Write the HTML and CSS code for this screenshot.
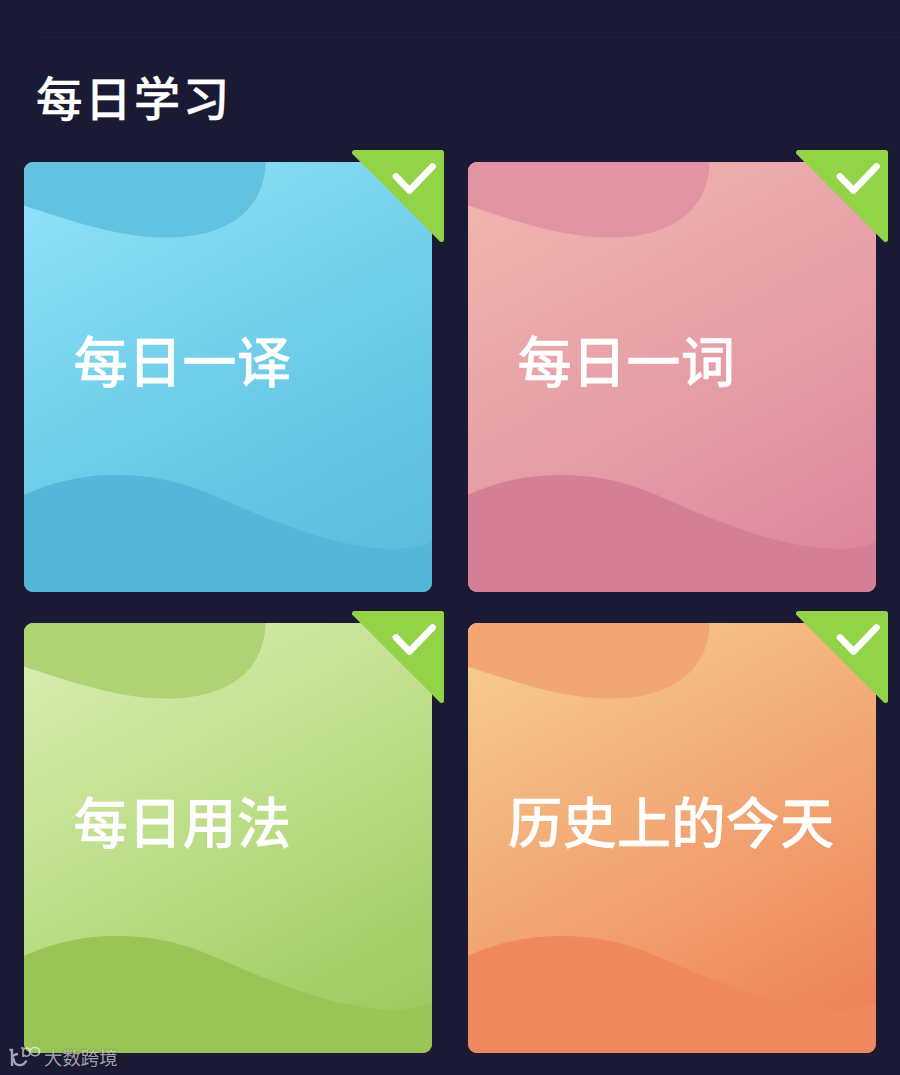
FILE: index.html
```html
<!DOCTYPE html>
<html lang="zh-CN">
  <head>
    <meta charset="UTF-8" />
    <meta name="viewport" content="width=device-width, initial-scale=1.0" />
    <title>每日学习</title>
    <link rel="stylesheet" href="styles.css">
  </head>
  <body>
    <!-- shared shapes -->
    <svg class="defs" width="0" height="0">
      <symbol id="waves" viewBox="0 0 408 430">
        <path class="blob" d="M0 0H241.500C241 46 206 75.500 142 75.500C95 75.500 47 59 0 43.500Z" />
        <path class="wave" d="M0 333C28 320 58 313 92 313C123 313 150 318 176 328C204 339 230 352 259 362C300 378 340 387 370 387C386 387 398 384 408 380V430H0Z" />
      </symbol>
      <symbol id="check" viewBox="0 0 92 92">
        <path class="corner" d="M2.500 2.500H89.500V89.500Z" />
        <path class="tick" d="M44 26.500L57.500 40.500L80.500 16.500" />
      </symbol>
    </svg>

    <main>
      <header>
        <h1>每日学习</h1>
      </header>

      <section id="liste">
        <article class="blue">
          <svg class="waves"><use href="#waves" /></svg>
          <h2>每日一译</h2>
          <svg class="check"><use href="#check" /></svg>
        </article>
        <article class="pink">
          <svg class="waves"><use href="#waves" /></svg>
          <h2>每日一词</h2>
          <svg class="check"><use href="#check" /></svg>
        </article>
        <article class="green">
          <svg class="waves"><use href="#waves" /></svg>
          <h2>每日用法</h2>
          <svg class="check"><use href="#check" /></svg>
        </article>
        <article class="orange">
          <svg class="waves"><use href="#waves" /></svg>
          <h2 class="lang">历史上的今天</h2>
          <svg class="check"><use href="#check" /></svg>
        </article>
      </section>
    </main>

    <div class="watermark">
      <svg viewBox="0 0 34 24">
        <path d="M1.500 5H4V21M4 13Q5 9.500 10 9M5.500 13C6 22 15 22 18.500 15.500" />
        <path class="thin" d="M13 3H15V12M15 7.500C15 1.500 22 1.500 22 7C22 12.500 15 12.500 15 7.500M22 7C22 1 31.500 1 31.500 6.500C31.500 12 24 12 22 7" />
      </svg>
      <span>大数跨境</span>
    </div>
  </body>
</html>
```
FILE: styles.css
```css
* {
  box-sizing: border-box;
  margin: 0;
  padding: 0;
}

body {
  background-color: #1b1a35;
  color: white;
  font-family: "Noto Sans CJK SC", sans-serif;
  height: 1075px;
  overflow: hidden;
}
.defs {
  position: absolute;
}
main {
  padding: 37px 24px 0;
}
header {
  height: 125px;
  margin-right: -24px;
  margin-left: 14px;
  border-top: 1px solid #201f3a;
}
h1 {
  padding-top: 23px;
  margin-left: -2px;
  font-size: 46.5px;
  font-weight: 500;
  line-height: 70px;
  letter-spacing: 2.4px;
  -webkit-text-stroke: 0.3px white;
}
#liste {
  display: grid;
  grid-template-columns: 408px 408px;
  grid-auto-rows: 430px;
  gap: 31.4px 36px;
}

article {
  position: relative;
  display: flex;
  align-items: center;
  padding: 0 0 37px 49.5px;
  border-radius: 9px;
}
.waves {
  position: absolute;
  top: 0;
  left: 0;
  width: 408px;
  height: 430px;
  border-radius: 9px;
}
.blob {
  fill: var(--blob);
}
.wave {
  fill: var(--wave);
}
h2 {
  position: relative;
  font-size: 54.4px;
  font-weight: 500;
  line-height: 80px;
  white-space: nowrap;
  -webkit-text-stroke: 0.3px white;
}
.lang {
  margin-left: -9.5px;
}

/* green corner that hangs over the card */
.check {
  position: absolute;
  top: -12px;
  right: -12px;
  width: 92px;
  height: 92px;
}
.corner {
  fill: #93d348;
  stroke: #93d348;
  stroke-width: 5;
  stroke-linejoin: round;
}
.tick {
  fill: none;
  stroke: white;
  stroke-width: 6.8;
  stroke-linecap: round;
  stroke-linejoin: round;
}

.blue {
  background: linear-gradient(152deg, #8fe1f7 5%, #65c7e3 65%, #5bbadb);
  --blob: #62c3e1;
  --wave: #55b7d8;
}
.pink {
  background: linear-gradient(152deg, #f1b5b0 5%, #e49ba5 58%, #dc829c);
  --blob: #e294a4;
  --wave: #d57f96;
}
.green {
  background: linear-gradient(152deg, #d8edb0 5%, #b7da80 55%, #9bc459);
  --blob: #afd374;
  --wave: #9ac455;
}
.orange {
  background: linear-gradient(152deg, #f6cb8e 5%, #f1a270 55%, #ee8156 95%);
  --blob: #f2a674;
  --wave: #ef885b;
}

.watermark {
  position: absolute;
  left: 8px;
  top: 1044px;
  display: flex;
  align-items: center;
  gap: 2px;
  color: rgba(255, 255, 255, 0.6);
  font-size: 18.4px;
  line-height: 26px;
  text-shadow: 0 0 2px rgba(0, 0, 0, 0.5);
}
.watermark svg {
  width: 34px;
  height: 24px;
  fill: none;
  stroke: rgba(255, 255, 255, 0.6);
  stroke-width: 2.4;
}
.watermark .thin {
  stroke-width: 1.6;
}
```
